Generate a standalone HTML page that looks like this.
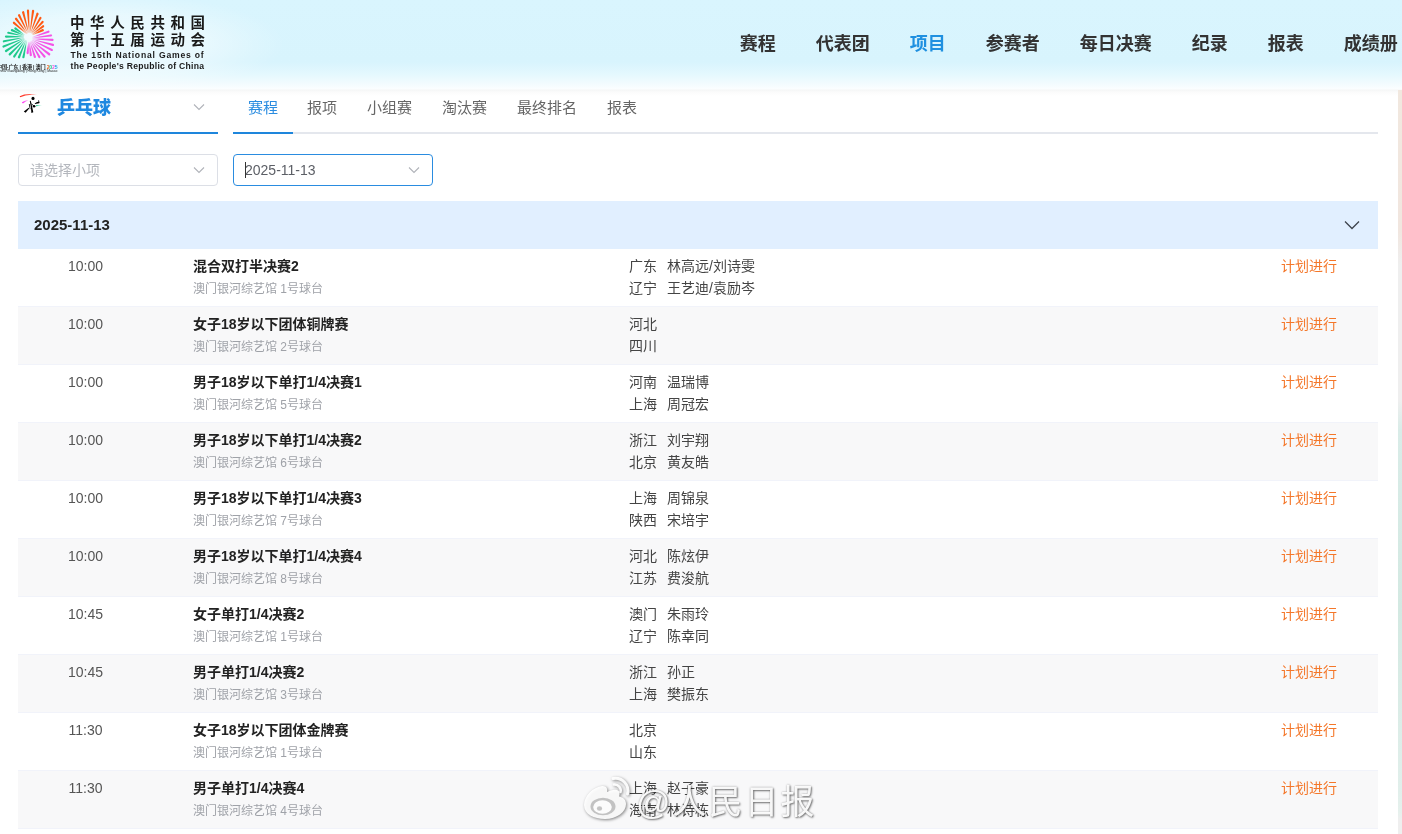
<!DOCTYPE html>
<html lang="zh-CN"><head><meta charset="utf-8"><title>第十五届全国运动会 - 乒乓球 赛程</title>
<style>
*{box-sizing:border-box;margin:0;padding:0}
html,body{width:1402px;height:834px;overflow:hidden;background:#fff}
body{position:relative;will-change:transform;font-family:"Liberation Sans","Noto Sans CJK SC",sans-serif;font-size:14px;color:#333}
.abs{position:absolute}
#hdr{position:absolute;left:0;top:0;width:1402px;height:96px;background:linear-gradient(180deg,#d9f5fe 0,#d8f4fd 62px,#e4f8fe 74px,#f1fbfe 83px,#fbfeff 89px,#f5f6f6 90px,#fbfbfb 92px,#ffffff 96px)}
#hdrL{position:absolute;left:0;top:0;width:300px;height:90px;background:radial-gradient(ellipse 185px 52px at 100px 44px,rgba(255,255,255,.5) 0,rgba(255,255,255,.42) 55%,rgba(255,255,255,.15) 82%,rgba(255,255,255,0) 100%)}
#strip{position:absolute;left:1398px;top:90px;width:4px;height:744px;background:linear-gradient(180deg,#f1e8df 0,#f1e6df 140px,#efefef 175px,#efefef 310px,#d9ece8 340px,#d3e9e2 520px,#e1efeb 700px,#e6f1ed 722px,#efefef 730px,#efefef 744px)}
#logo{position:absolute;left:0;top:6px}
.cn{position:absolute;left:70px;font-weight:700;font-size:14.5px;letter-spacing:5.6px;color:#1a1a1a;line-height:16px;white-space:nowrap}
.en{position:absolute;left:70.5px;font-weight:700;font-size:8.6px;letter-spacing:.75px;color:#1a1a1a;line-height:10px;white-space:nowrap}
.cap1{position:absolute;left:-3px;top:62.5px;font-size:5.15px;font-weight:700;color:#222;white-space:nowrap;letter-spacing:-.2px}
.cap2{position:absolute;left:-3px;top:69.3px;font-size:3.4px;color:#222;white-space:nowrap}
.nav{position:absolute;top:31px;font-size:18px;font-weight:700;color:#333;line-height:26px;white-space:nowrap}
.nav.on{color:#1f90e0}
#sport{position:absolute;left:18px;top:92px;width:200px;height:42px;border-bottom:2px solid #1e86dc}
#sport b{position:absolute;left:39px;top:4px;font-size:18px;line-height:24px;color:#1f88e0;font-weight:900;white-space:nowrap}
#tabs{position:absolute;left:233px;top:132px;width:1145px;height:2px;background:#e4e7ed}
#tabs i{position:absolute;left:0;top:0;width:60px;height:2px;background:#1e86dc}
.tab{position:absolute;top:96.8px;font-size:15px;line-height:22px;color:#666;white-space:nowrap}
.tab.on{color:#2a8ce0}
.sel{position:absolute;top:154px;width:200px;height:32px;border:1px solid #dcdfe6;border-radius:4px;background:#fff;font-size:14px;line-height:30px;padding-left:11px;color:#b4b7bd;white-space:nowrap}
.sel.f{border-color:#2a8ce0;color:#5c5f66}
.chev{position:absolute}
#dh{position:absolute;left:18px;top:201px;width:1360px;height:48px;background:#e1efff}
#dh b{position:absolute;left:16px;top:13px;font-size:15px;line-height:22px;color:#222;font-weight:700}
.row{position:absolute;left:18px;width:1360px;height:58px;background:#fff}
.row.alt{background:#f8f8f9}
.row.alt::before{content:"";position:absolute;left:0;top:-1px;width:100%;height:1px;background:#f1f3fa}
.row.alt::after{content:"";position:absolute;left:0;bottom:0;width:100%;height:1px;background:#f1f3fa}
.row span{position:absolute;white-space:nowrap;line-height:20px}
.tm{left:0;width:135px;text-align:center;top:7px;color:#555}
.tt{left:175px;top:7px;font-weight:700;color:#222}
.vn{left:175px;top:29.6px;font-size:12px;color:#9fa2a8;line-height:18px}
.rg{left:611px;color:#444}
.nm{left:649px;color:#444}
.r1{top:7px}.r2{top:29px}
.st{right:41px;top:7px;color:#f4772a}
#wm{position:absolute;left:636px;top:779px;font-size:34px;line-height:46px;color:rgba(255,255,255,.94);font-weight:400;white-space:nowrap;text-shadow:1px 1px 2px rgba(0,0,0,.5),0 0 2px rgba(0,0,0,.3);letter-spacing:2px}
#wb{position:absolute;left:580px;top:774px;filter:drop-shadow(1px 1px 1.5px rgba(0,0,0,.5))}
</style></head><body>
<div id="hdr"></div><div id="hdrL"></div>
<div id="strip"></div>
<svg id="logo" width="62" height="60" viewBox="0 0 62 60"><defs><radialGradient id="fade" gradientUnits="userSpaceOnUse" cx="28.6" cy="31.2" r="11"><stop offset="0" stop-color="#f4fbfe" stop-opacity="1"/><stop offset=".3" stop-color="#f4fbfe" stop-opacity=".8"/><stop offset="1" stop-color="#f4fbfe" stop-opacity="0"/></radialGradient></defs><path d="M27.01 27.83 L14.69 15.94 A1.12 1.12 0 0 0 13.21 17.63 L26.71 28.17 Z" fill="#ff5a14"/><path d="M27.54 27.39 L16.91 12.11 A1.12 1.12 0 0 0 15.13 13.48 L27.19 27.66 Z" fill="#ff5a14"/><path d="M28.16 27.06 L20.10 8.64 A1.12 1.12 0 0 0 18.08 9.64 L27.75 27.26 Z" fill="#ff5a14"/><path d="M28.82 26.86 L24.24 5.98 A1.12 1.12 0 0 0 22.06 6.55 L28.39 26.97 Z" fill="#ff5a14"/><path d="M29.52 26.79 L29.10 4.67 A1.12 1.12 0 0 0 26.86 4.81 L29.07 26.82 Z" fill="#ff5a14"/><path d="M30.21 26.87 L34.19 4.99 A1.12 1.12 0 0 0 31.96 4.68 L29.76 26.80 Z" fill="#ff5a14"/><path d="M30.87 27.07 L38.50 8.13 A1.12 1.12 0 0 0 36.38 7.38 L30.45 26.92 Z" fill="#ff5a14"/><path d="M31.49 27.41 L41.40 12.54 A1.12 1.12 0 0 0 39.46 11.39 L31.10 27.18 Z" fill="#ff5a14"/><path d="M32.02 27.86 L43.38 16.66 A1.12 1.12 0 0 0 41.72 15.15 L31.68 27.56 Z" fill="#ff5a14"/><path d="M32.45 28.40 L43.75 21.19 A1.12 1.12 0 0 0 42.41 19.38 L32.18 28.04 Z" fill="#ff5a14"/><path d="M32.77 29.02 L43.24 25.13 A1.12 1.12 0 0 0 42.29 23.09 L32.58 28.62 Z" fill="#ff5a14"/><path d="M26.48 34.26 L22.34 50.88 A1.12 1.12 0 0 0 24.54 51.31 L26.92 34.35 Z" fill="#1ec98c"/><path d="M25.83 34.02 L17.91 50.87 A1.12 1.12 0 0 0 19.99 51.72 L26.24 34.19 Z" fill="#1ec98c"/><path d="M25.24 33.65 L13.32 49.84 A1.12 1.12 0 0 0 15.19 51.09 L25.61 33.90 Z" fill="#1ec98c"/><path d="M24.73 33.18 L8.94 47.59 A1.12 1.12 0 0 0 10.52 49.19 L25.05 33.50 Z" fill="#1ec98c"/><path d="M24.32 32.61 L5.37 44.03 A1.12 1.12 0 0 0 6.61 45.91 L24.57 32.99 Z" fill="#1ec98c"/><path d="M24.04 31.97 L3.11 39.46 A1.12 1.12 0 0 0 3.95 41.55 L24.21 32.39 Z" fill="#1ec98c"/><path d="M23.89 31.29 L3.67 34.16 A1.12 1.12 0 0 0 4.08 36.37 L23.97 31.74 Z" fill="#1ec98c"/><path d="M23.87 30.60 L6.04 29.45 A1.12 1.12 0 0 0 6.01 31.70 L23.87 31.05 Z" fill="#1ec98c"/><path d="M24.00 29.91 L8.62 25.67 A1.12 1.12 0 0 0 8.14 27.86 L23.90 30.35 Z" fill="#1ec98c"/><path d="M24.25 29.26 L12.36 23.08 A1.12 1.12 0 0 0 11.46 25.15 L24.07 29.68 Z" fill="#1ec98c"/><path d="M24.63 28.68 L16.03 21.55 A1.12 1.12 0 0 0 14.74 23.40 L24.37 29.05 Z" fill="#1ec98c"/><path d="M32.31 31.50 L48.77 26.79 A1.12 1.12 0 0 0 48.04 24.66 L32.17 31.08 Z" fill="#f552e6"/><path d="M32.43 32.19 L50.98 30.62 A1.12 1.12 0 0 0 50.68 28.39 L32.37 31.74 Z" fill="#f552e6"/><path d="M32.41 32.89 L52.39 35.11 A1.12 1.12 0 0 0 52.54 32.87 L32.44 32.44 Z" fill="#f552e6"/><path d="M32.25 33.56 L52.63 40.03 A1.12 1.12 0 0 0 53.22 37.86 L32.37 33.13 Z" fill="#f552e6"/><path d="M31.96 34.20 L51.32 44.90 A1.12 1.12 0 0 0 52.33 42.89 L32.16 33.80 Z" fill="#f552e6"/><path d="M31.55 34.76 L48.50 49.15 A1.12 1.12 0 0 0 49.88 47.37 L31.83 34.41 Z" fill="#f552e6"/><path d="M31.04 35.23 L43.63 51.31 A1.12 1.12 0 0 0 45.34 49.85 L31.38 34.94 Z" fill="#f552e6"/><path d="M30.44 35.59 L38.36 51.61 A1.12 1.12 0 0 0 40.33 50.51 L30.83 35.37 Z" fill="#f552e6"/><path d="M29.79 35.83 L33.80 51.27 A1.12 1.12 0 0 0 35.94 50.58 L30.21 35.69 Z" fill="#f552e6"/><path d="M29.10 35.93 L29.69 49.32 A1.12 1.12 0 0 0 31.93 49.07 L29.54 35.88 Z" fill="#f552e6"/><path d="M28.40 35.90 L26.53 46.91 A1.12 1.12 0 0 0 28.77 47.11 L28.85 35.94 Z" fill="#f552e6"/><circle cx="28.6" cy="31.2" r="11" fill="url(#fade)"/></svg>
<div class="cap1">中国·广东 | 香港 | 澳门 <span style="color:#f4621f">2</span><span style="color:#1fc48a">0</span><span style="color:#f050e0">2</span><span style="color:#2aa7e8">5</span></div>
<div class="cap2">China·Guangdong | Hong Kong | Macao</div>
<div class="cn" style="top:14.5px">中华人民共和国</div>
<div class="cn" style="top:31.5px">第十五届运动会</div>
<div class="en" style="top:50px;letter-spacing:.8px">The 15th National Games of</div>
<div class="en" style="top:60.5px;letter-spacing:.27px">the People's Republic of China</div>

<div class="nav" style="left:739.7px">赛程</div>
<div class="nav" style="left:815.7px">代表团</div>
<div class="nav on" style="left:909.7px">项目</div>
<div class="nav" style="left:985.7px">参赛者</div>
<div class="nav" style="left:1079.7px">每日决赛</div>
<div class="nav" style="left:1191.7px">纪录</div>
<div class="nav" style="left:1267.7px">报表</div>
<div class="nav" style="left:1343.7px">成绩册</div>

<div id="sport">
<svg class="chev" style="left:1px;top:1px" width="26" height="22" viewBox="0 0 26 22">
<defs><linearGradient id="gr" x1="0" x2="1" y1="0" y2="0"><stop offset="0" stop-color="#ff2a1a"/><stop offset=".6" stop-color="#ff3a2a" stop-opacity=".8"/><stop offset="1" stop-color="#ff6a5a" stop-opacity="0"/></linearGradient>
<linearGradient id="gm" x1="0" x2="1" y1="0" y2="0"><stop offset="0" stop-color="#ff20f0"/><stop offset="1" stop-color="#ff60f5" stop-opacity=".55"/></linearGradient>
<linearGradient id="gg" x1="0" x2="1" y1="0" y2="0"><stop offset="0" stop-color="#18c888"/><stop offset="1" stop-color="#40d8a0" stop-opacity=".1"/></linearGradient></defs>
<path d="M0.7 3.2 Q8 -0.7 19.5 2.3 Q8.5 0.5 1.2 4.3 Z" fill="url(#gr)"/>
<path d="M2.9 9.2 Q5.8 7.2 9.6 6.9 Q6.3 8.4 3.9 10.5 Z" fill="url(#gm)"/>
<path d="M17 12 L23.6 12.3 L17.3 13.3 Z" fill="url(#gg)"/>
<circle cx="14" cy="5.4" r="1.55" fill="#000"/>
<path d="M10.8 8.1 L11.75 7.8 L13.1 13.5 L14.3 19.3 L12.4 20.1 L11.9 14.5 Z" fill="#000"/>
<path d="M9.8 11.1 L10.65 10.9 L11.5 16.0 L10.9 16.4 Z" fill="#000"/>
<path d="M9.7 14.8 L10.2 15.5 L6.6 19.7 L4.8 18.4 Z" fill="#000"/>
<path d="M12.3 10.6 L14.6 12.9" stroke="#000" stroke-width=".9" fill="none"/><circle cx="15.1" cy="13.2" r="1.3" fill="#000"/>
<path d="M15.6 10.6 L18 9.1 L20.7 8.8 L20.2 10.2 L16.2 11 Z" fill="#000"/>
<path d="M19.6 7.2 L19.7 9.2" stroke="#000" stroke-width=".7" fill="none"/>
</svg>
<b>乒乓球</b>
<svg class="chev" style="left:175px;top:11px" width="12" height="8" viewBox="0 0 12 8"><path d="M1 1.5 L6 6.5 L11 1.5" fill="none" stroke="#b0b3b9" stroke-width="1.1"/></svg>
</div>
<div id="tabs"><i></i></div>
<div class="tab on" style="left:248px">赛程</div>
<div class="tab" style="left:307px">报项</div>
<div class="tab" style="left:367px">小组赛</div>
<div class="tab" style="left:442px">淘汰赛</div>
<div class="tab" style="left:517px">最终排名</div>
<div class="tab" style="left:607px">报表</div>

<div class="sel" style="left:18px">请选择小项<svg class="chev" style="left:174px;top:11px" width="12" height="8" viewBox="0 0 12 8"><path d="M1 1.5 L6 6.5 L11 1.5" fill="none" stroke="#b0b3b9" stroke-width="1.1"/></svg></div>
<div class="sel f" style="left:233px"><span style="position:absolute;left:11px;top:7px;width:1px;height:16px;background:#333"></span>2025-11-13<svg class="chev" style="left:174px;top:11px" width="12" height="8" viewBox="0 0 12 8"><path d="M1 1.5 L6 6.5 L11 1.5" fill="none" stroke="#b0b3b9" stroke-width="1.1"/></svg></div>

<div id="dh"><b>2025-11-13</b>
<svg class="chev" style="left:1326px;top:19px" width="16" height="10" viewBox="0 0 16 10"><path d="M1 1.5 L8 8.5 L15 1.5" fill="none" stroke="#3e444d" stroke-width="1.3"/></svg>
</div>
<div class="row" style="top:249px">
  <span class="tm">10:00</span>
  <span class="tt">混合双打半决赛2</span>
  <span class="vn">澳门银河综艺馆 1号球台</span>
  <span class="rg r1">广东</span><span class="nm r1">林高远/刘诗雯</span>
  <span class="rg r2">辽宁</span><span class="nm r2">王艺迪/袁励岑</span>
  <span class="st">计划进行</span>
</div>
<div class="row alt" style="top:307px">
  <span class="tm">10:00</span>
  <span class="tt">女子18岁以下团体铜牌赛</span>
  <span class="vn">澳门银河综艺馆 2号球台</span>
  <span class="rg r1">河北</span><span class="nm r1"></span>
  <span class="rg r2">四川</span><span class="nm r2"></span>
  <span class="st">计划进行</span>
</div>
<div class="row" style="top:365px">
  <span class="tm">10:00</span>
  <span class="tt">男子18岁以下单打1/4决赛1</span>
  <span class="vn">澳门银河综艺馆 5号球台</span>
  <span class="rg r1">河南</span><span class="nm r1">温瑞博</span>
  <span class="rg r2">上海</span><span class="nm r2">周冠宏</span>
  <span class="st">计划进行</span>
</div>
<div class="row alt" style="top:423px">
  <span class="tm">10:00</span>
  <span class="tt">男子18岁以下单打1/4决赛2</span>
  <span class="vn">澳门银河综艺馆 6号球台</span>
  <span class="rg r1">浙江</span><span class="nm r1">刘宇翔</span>
  <span class="rg r2">北京</span><span class="nm r2">黄友皓</span>
  <span class="st">计划进行</span>
</div>
<div class="row" style="top:481px">
  <span class="tm">10:00</span>
  <span class="tt">男子18岁以下单打1/4决赛3</span>
  <span class="vn">澳门银河综艺馆 7号球台</span>
  <span class="rg r1">上海</span><span class="nm r1">周锦泉</span>
  <span class="rg r2">陕西</span><span class="nm r2">宋培宇</span>
  <span class="st">计划进行</span>
</div>
<div class="row alt" style="top:539px">
  <span class="tm">10:00</span>
  <span class="tt">男子18岁以下单打1/4决赛4</span>
  <span class="vn">澳门银河综艺馆 8号球台</span>
  <span class="rg r1">河北</span><span class="nm r1">陈炫伊</span>
  <span class="rg r2">江苏</span><span class="nm r2">费浚航</span>
  <span class="st">计划进行</span>
</div>
<div class="row" style="top:597px">
  <span class="tm">10:45</span>
  <span class="tt">女子单打1/4决赛2</span>
  <span class="vn">澳门银河综艺馆 1号球台</span>
  <span class="rg r1">澳门</span><span class="nm r1">朱雨玲</span>
  <span class="rg r2">辽宁</span><span class="nm r2">陈幸同</span>
  <span class="st">计划进行</span>
</div>
<div class="row alt" style="top:655px">
  <span class="tm">10:45</span>
  <span class="tt">男子单打1/4决赛2</span>
  <span class="vn">澳门银河综艺馆 3号球台</span>
  <span class="rg r1">浙江</span><span class="nm r1">孙正</span>
  <span class="rg r2">上海</span><span class="nm r2">樊振东</span>
  <span class="st">计划进行</span>
</div>
<div class="row" style="top:713px">
  <span class="tm">11:30</span>
  <span class="tt">女子18岁以下团体金牌赛</span>
  <span class="vn">澳门银河综艺馆 1号球台</span>
  <span class="rg r1">北京</span><span class="nm r1"></span>
  <span class="rg r2">山东</span><span class="nm r2"></span>
  <span class="st">计划进行</span>
</div>
<div class="row alt" style="top:771px">
  <span class="tm">11:30</span>
  <span class="tt">男子单打1/4决赛4</span>
  <span class="vn">澳门银河综艺馆 4号球台</span>
  <span class="rg r1">上海</span><span class="nm r1">赵子豪</span>
  <span class="rg r2">海南</span><span class="nm r2">林诗栋</span>
  <span class="st">计划进行</span>
</div>
<svg id="wb" width="56" height="50" viewBox="0 0 56 50">
<path d="M22 12 C13 13 4 22 4 31 C4 40 14 45 25 45 C37 45 46 38 46 30 C46 25 42 23 39 22.5 C40 20 40 17 37 16 C34 15 30 16.5 27 18 C28 14.5 26 11.5 22 12 Z" fill="#fff" fill-opacity=".93"/>
<ellipse cx="23" cy="32.5" rx="12.5" ry="8.8" fill="#b9b9b9" fill-opacity=".85"/>
<ellipse cx="22.5" cy="33" rx="9.3" ry="6.8" fill="#fff" fill-opacity=".95"/>
<ellipse cx="19.5" cy="34.5" rx="2.6" ry="2.2" fill="#c4c4c4"/>
<path d="M34 10.5 A6 6 0 0 1 40.5 18" fill="none" stroke="#fff" stroke-opacity=".93" stroke-width="2.6" stroke-linecap="round"/>
<path d="M33 4.5 A12.5 12.5 0 0 1 47.5 20" fill="none" stroke="#fff" stroke-opacity=".93" stroke-width="3" stroke-linecap="round"/>
</svg>
<div id="wm">@人民日报</div>
</body></html>
